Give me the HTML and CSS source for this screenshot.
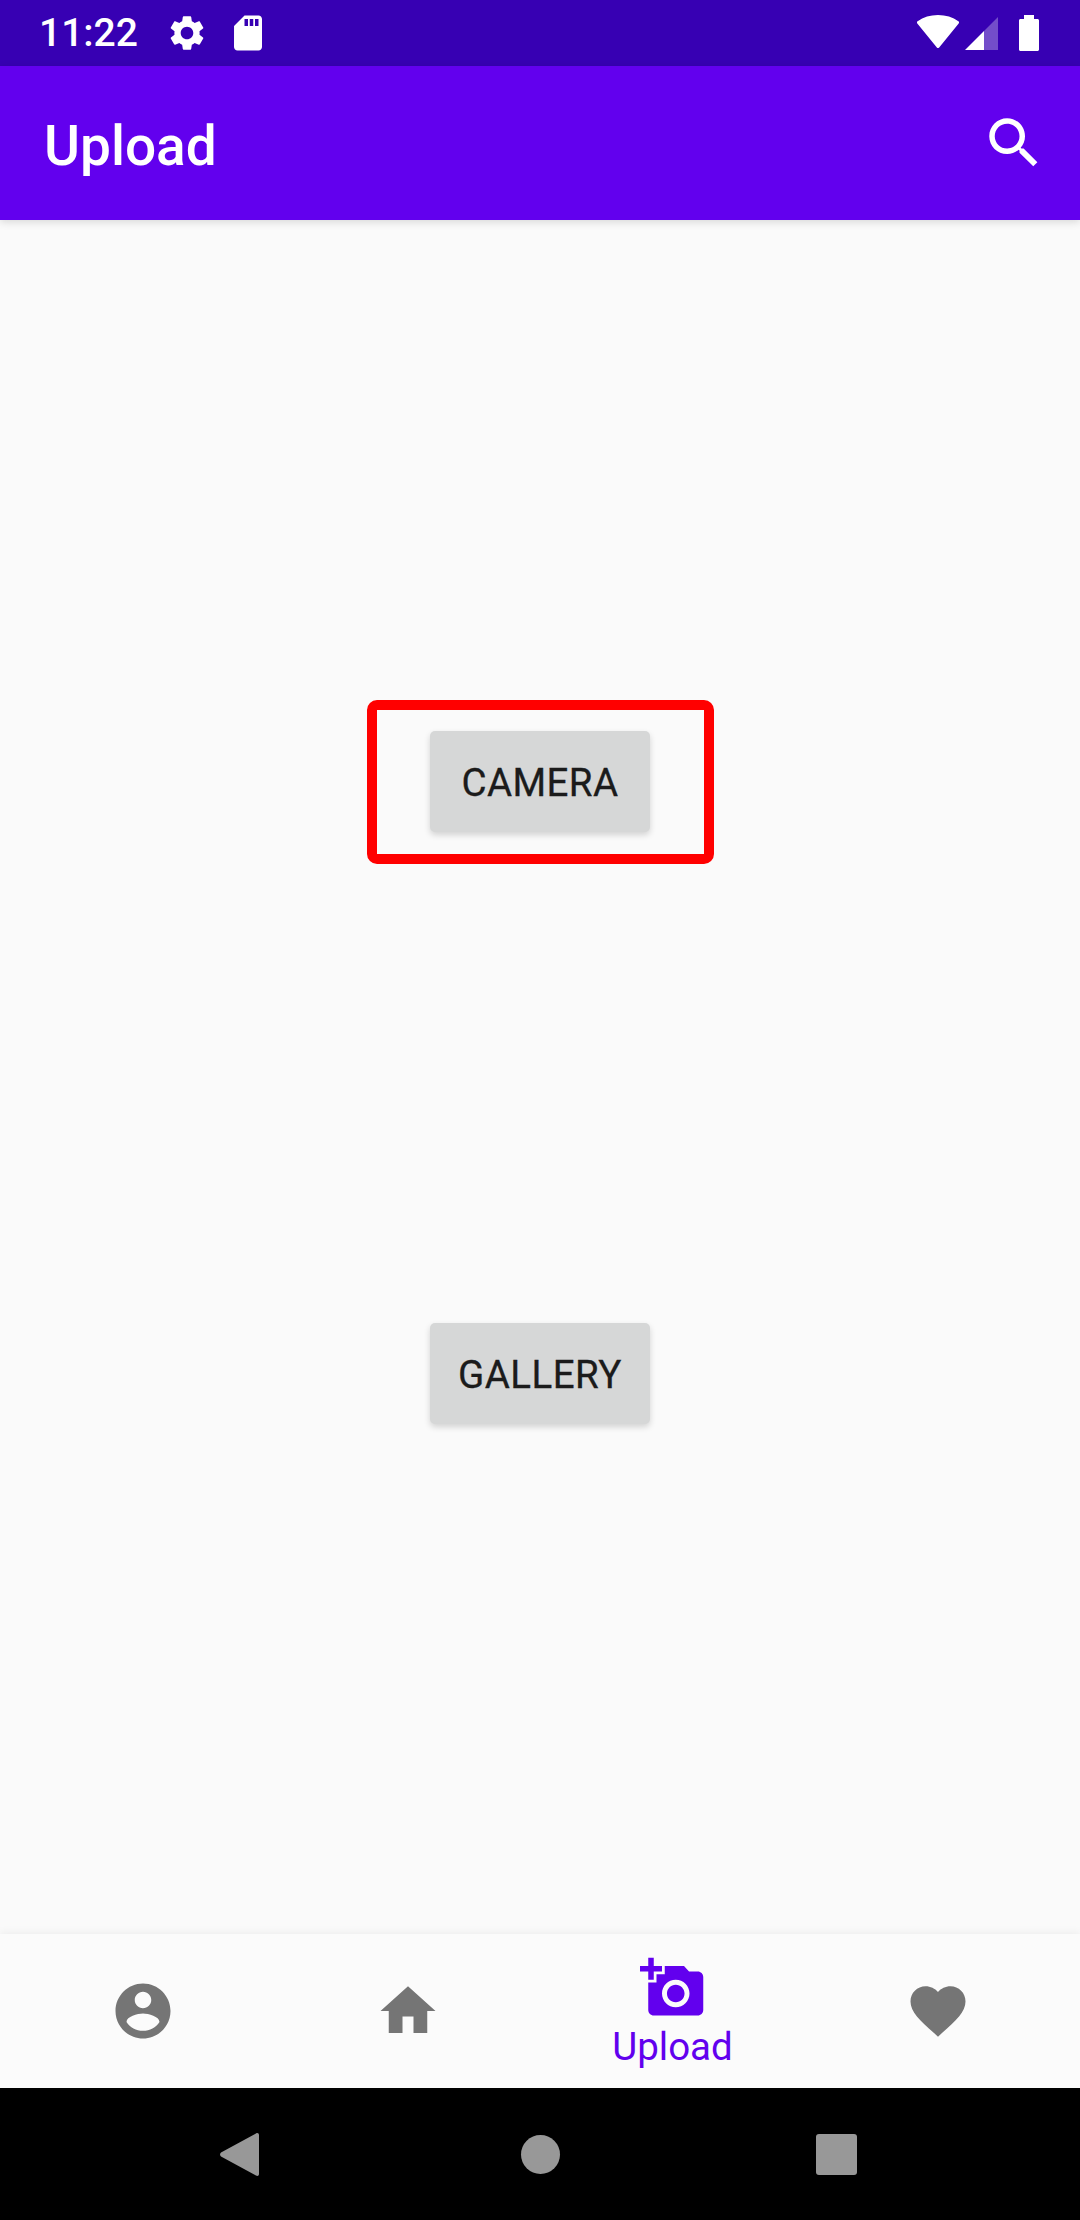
FILE: index.html
```html
<!DOCTYPE html>
<html lang="en">
<head>
    <meta charset="UTF-8">
    <meta name="viewport" content="width=device-width, initial-scale=1.0">
    <title>Upload</title>
    <link rel="stylesheet" href="styles.css">
</head>
<body>
    <div class="status-bar">
        <span class="status-time">11:22</span>
        <svg class="status-icon status-gear" viewBox="0 0 24 24"><path d="M19.14 12.94c.04-.3.06-.61.06-.94 0-.32-.02-.64-.07-.94l2.03-1.58c.18-.14.23-.41.12-.61l-1.92-3.32c-.12-.22-.37-.29-.59-.22l-2.39.96c-.5-.38-1.03-.7-1.62-.94l-.36-2.54c-.04-.24-.24-.41-.48-.41h-3.84c-.24 0-.43.17-.47.41l-.36 2.54c-.59.24-1.13.57-1.62.94l-2.39-.96c-.22-.08-.47 0-.59.22L2.74 8.87c-.12.21-.08.47.12.61l2.03 1.58c-.05.3-.09.63-.09.94s.02.64.07.94l-2.03 1.58c-.18.14-.23.41-.12.61l1.92 3.32c.12.22.37.29.59.22l2.39-.96c.5.38 1.03.7 1.62.94l.36 2.54c.05.24.24.41.48.41h3.84c.24 0 .44-.17.47-.41l.36-2.54c.59-.24 1.13-.56 1.62-.94l2.39.96c.22.08.47 0 .59-.22l1.92-3.32c.12-.22.07-.47-.12-.61l-2.01-1.58zM12 15.6c-1.98 0-3.6-1.62-3.6-3.6s1.62-3.6 3.6-3.6 3.6 1.62 3.6 3.6-1.62 3.6-3.6 3.6z"/></svg>
        <svg class="status-icon status-sd" viewBox="0 0 24 24"><path d="M18 2h-8L4.02 8 4 20c0 1.1.9 2 2 2h12c1.1 0 2-.9 2-2V4c0-1.1-.9-2-2-2zm-6 6h-2V4h2v4zm3 0h-2V4h2v4zm3 0h-2V4h2v4z"/></svg>
        <div class="status-right">
            <svg class="status-wifi" viewBox="0 0 42 33"><path d="M21 31.5 1.5 7.5C7 3.5 13.5 1.5 21 1.5s14 2 19.500 6z" stroke="#fff" stroke-width="3" stroke-linejoin="round"/></svg>
            <svg class="status-signal" viewBox="0 0 33 33"><path class="signal-dim" d="M19 14 33 0v33H19z"/><path d="M0 33 19 14v19z"/></svg>
            <svg class="status-battery" viewBox="0 0 20 36"><path d="M5 0h10v4h3.500c.8 0 1.500.7 1.500 1.500v29c0 .8-.7 1.500-1.500 1.500h-17C.7 36 0 35.300 0 34.500v-29C0 4.700.7 4 1.500 4H5z"/></svg>
        </div>
    </div>

    <div class="app-bar">
        <h1 class="app-title">Upload</h1>
        <svg class="search-icon" viewBox="0 0 24 24"><path d="M15.5 14h-.79l-.28-.27C15.41 12.59 16 11.11 16 9.5 16 5.91 13.09 3 9.5 3S3 5.91 3 9.5 5.91 16 9.5 16c1.61 0 3.09-.59 4.23-1.57l.27.28v.79l5 4.99L20.49 19l-4.99-5zm-6 0C7.01 14 5 11.99 5 9.5S7.01 5 9.5 5 14 7.01 14 9.5 11.99 14 9.5 14z"/></svg>
    </div>

    <div class="content">
        <button class="action-button">CAMERA</button>
        <button class="action-button">GALLERY</button>
        <div class="highlight-box"></div>
    </div>

    <div class="bottom-nav">
        <div class="nav-item">
            <svg class="nav-icon" viewBox="0 0 24 24"><path d="M12 2C6.48 2 2 6.48 2 12s4.48 10 10 10 10-4.48 10-10S17.52 2 12 2zm0 3c1.66 0 3 1.34 3 3s-1.34 3-3 3-3-1.34-3-3 1.34-3 3-3zm0 14.200c-2.500 0-4.710-1.280-6-3.220.03-1.990 4-3.080 6-3.080 1.990 0 5.970 1.090 6 3.080-1.290 1.940-3.500 3.220-6 3.220z"/></svg>
        </div>
        <div class="nav-item">
            <svg class="nav-icon" viewBox="0 0 24 24"><path d="M10 20v-6h4v6h5v-8h3L12 3 2 12h3v8z"/></svg>
        </div>
        <div class="nav-item nav-item-active">
            <svg class="nav-icon" viewBox="0 0 24 24"><path d="M3 4V1h2v3h3v2H5v3H3V6H0V4h3zm3 6V7h3V4h7l1.830 2H21c1.100 0 2 .9 2 2v12c0 1.100-.9 2-2 2H5c-1.100 0-2-.9-2-2V10h3zm7 9c2.760 0 5-2.240 5-5s-2.240-5-5-5-5 2.240-5 5 2.240 5 5 5zm-3.200-5c0 1.770 1.430 3.200 3.200 3.200s3.200-1.430 3.200-3.200-1.430-3.200-3.200-3.200-3.200 1.430-3.200 3.200z"/></svg>
            <span class="nav-label">Upload</span>
        </div>
        <div class="nav-item">
            <svg class="nav-icon" viewBox="0 0 24 24"><path d="M12 21.350l-1.450-1.320C5.400 15.360 2 12.280 2 8.500 2 5.420 4.420 3 7.500 3c1.740 0 3.410.81 4.500 2.090C13.090 3.810 14.760 3 16.500 3 19.580 3 22 5.420 22 8.500c0 3.780-3.400 6.860-8.550 11.540L12 21.350z"/></svg>
        </div>
    </div>

    <div class="system-nav">
        <svg class="system-back" viewBox="0 0 39 45"><path d="M36 1.500c1.300-1 3-.4 3 1.500v39c0 1.900-1.700 2.500-3 1.500L1 24.500c-1.300-1-1.300-3 0-4z"/></svg>
        <div class="system-home"></div>
        <div class="system-recent"></div>
    </div>
</body>
</html>
```

FILE: styles.css
```css
* {
    box-sizing: border-box;
}

html,
body {
    height: 100%;
}

body {
    margin: 0;
    display: flex;
    flex-direction: column;
    font-family: Roboto, "Liberation Sans", sans-serif;
    background-color: #fafafa;
    overflow: hidden;
}

.status-bar {
    height: 66px;
    flex-shrink: 0;
    display: flex;
    align-items: center;
    padding-left: 39px;
    background-color: #3700b3;
    color: #fff;
    fill: #fff;
}

.status-time {
    font-size: 39px;
    font-weight: 500;
    line-height: 66px;
}

.status-icon {
    width: 42px;
    height: 42px;
}

.status-gear {
    margin-left: 28px;
}

.status-sd {
    margin-left: 19px;
}

.status-right {
    margin-left: auto;
    padding-right: 41px;
    display: flex;
    align-items: flex-start;
    height: 66px;
}

.status-wifi {
    width: 42px;
    height: 33px;
    margin-top: 15px;
}

.status-signal {
    width: 33px;
    height: 33px;
    margin: 17px 0 0 6px;
}

.signal-dim {
    opacity: 0.3;
}

.status-battery {
    width: 20px;
    height: 36px;
    margin: 15px 0 0 21px;
}

.app-bar {
    height: 154px;
    flex-shrink: 0;
    display: flex;
    align-items: center;
    justify-content: space-between;
    padding: 0 33px 0 44px;
    background-color: #6200ee;
    box-shadow: 0 2px 8px rgba(0, 0, 0, 0.14);
    position: relative;
    z-index: 1;
}

.app-title {
    margin: 0;
    padding-top: 5px;
    font-size: 55px;
    font-weight: 500;
    color: #fff;
}

.search-icon {
    width: 66px;
    height: 66px;
    fill: #fff;
}

.content {
    flex: 1;
    position: relative;
    display: flex;
    flex-direction: column;
    align-items: center;
    justify-content: center;
    gap: 491px;
}

.action-button {
    width: 220px;
    height: 101px;
    padding: 2px 0 0;
    border: none;
    border-radius: 5px;
    background-color: #d6d7d7;
    color: #1b1b1b;
    font-family: inherit;
    font-size: 38.5px;
    letter-spacing: 0.45px;
    -webkit-text-stroke: 0.3px #1b1b1b;
    box-shadow: 0 3px 6px rgba(0, 0, 0, 0.16);
}

.highlight-box {
    position: absolute;
    left: 367px;
    top: 480px;
    width: 347px;
    height: 164px;
    border: 10px solid #ff0000;
    border-radius: 10px;
}

.bottom-nav {
    height: 154px;
    flex-shrink: 0;
    display: flex;
    padding: 0 10px;
    background-color: #fbfbfb;
    box-shadow: 0 -2px 8px rgba(0, 0, 0, 0.05);
    fill: #757575;
    position: relative;
}

.nav-item {
    flex: 1;
    display: flex;
    flex-direction: column;
    align-items: center;
    justify-content: center;
}

.nav-icon {
    width: 66px;
    height: 66px;
}

.nav-item-active {
    fill: #6200ee;
    color: #6200ee;
}

.nav-label {
    font-size: 38.5px;
    line-height: 45px;
    margin: 3px 0 -2px;
}

.system-nav {
    height: 132px;
    flex-shrink: 0;
    display: flex;
    align-items: center;
    padding-left: 220px;
    background-color: #000;
}

.system-back {
    width: 39px;
    height: 45px;
    fill: #989898;
    margin-right: 262px;
}

.system-home {
    width: 39px;
    height: 39px;
    border-radius: 50%;
    background-color: #989898;
    margin-right: 256px;
}

.system-recent {
    width: 41px;
    height: 41px;
    border-radius: 3px;
    background-color: #989898;
}
```
